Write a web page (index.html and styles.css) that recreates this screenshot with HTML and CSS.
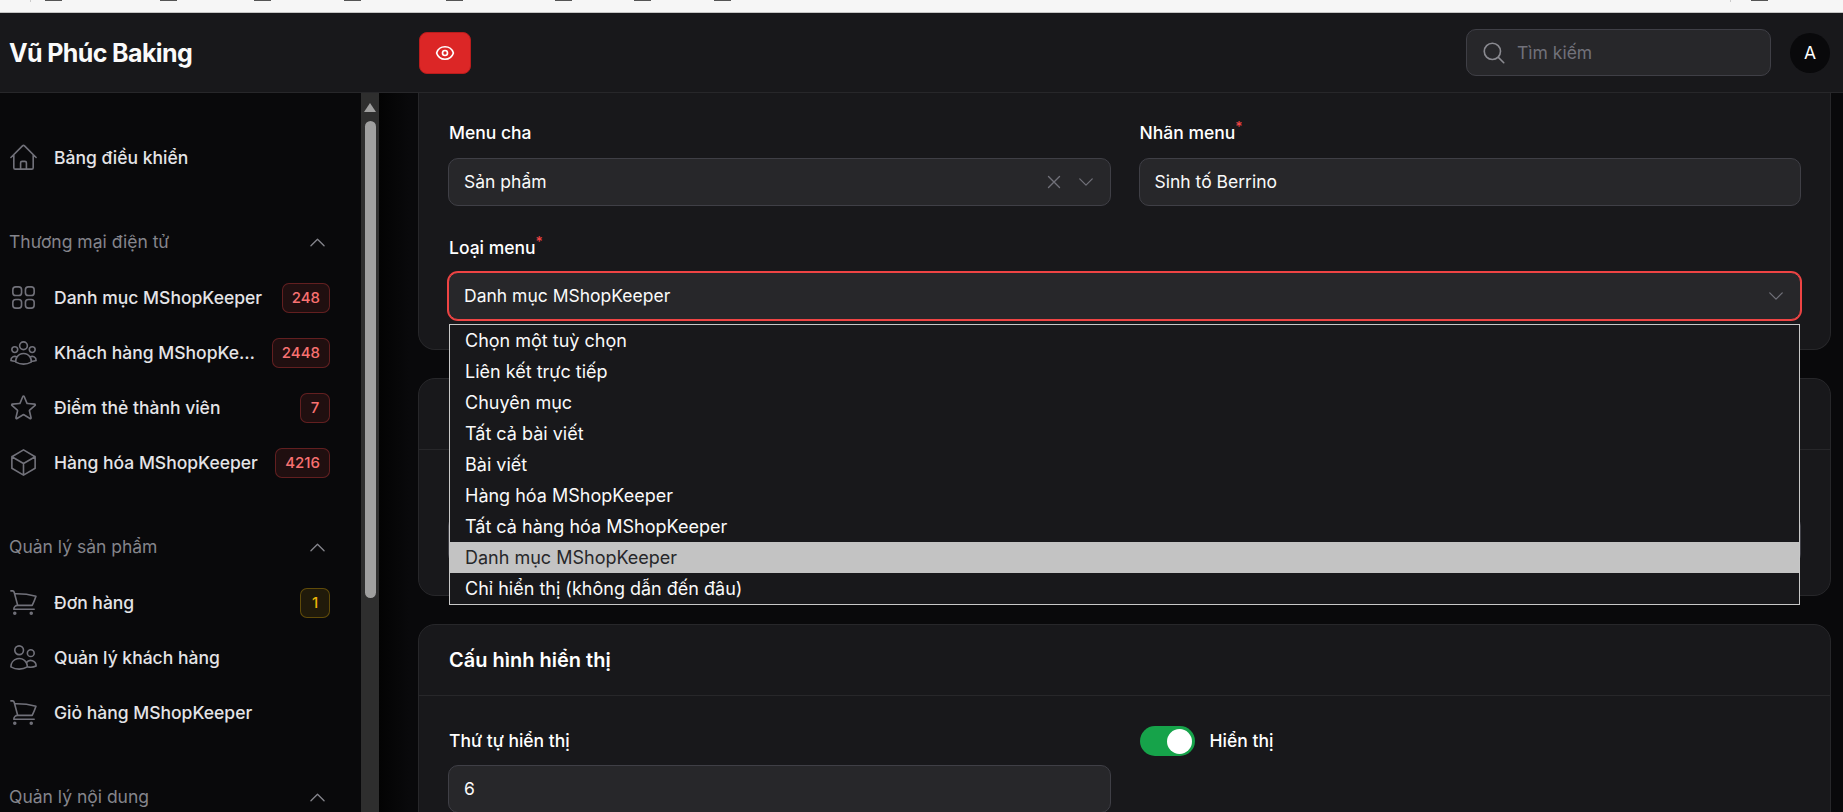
FILE: index.html
```html
<!DOCTYPE html>
<html lang="vi">
<head>
  <meta charset="UTF-8" />
  <meta name="viewport" content="width=device-width, initial-scale=1" />
  <title>Vũ Phúc Baking</title>
  <link rel="stylesheet" href="styles.css">
</head>
<body>

  <svg class="sprite" xmlns="http://www.w3.org/2000/svg">
    <symbol id="i-home" viewBox="0 0 24 24"><path d="m2.25 12 8.954-8.955c.44-.439 1.152-.439 1.591 0L21.75 12M4.5 9.75v10.125c0 .621.504 1.125 1.125 1.125H9.75v-4.875c0-.621.504-1.125 1.125-1.125h2.25c.621 0 1.125.504 1.125 1.125V21h4.125c.621 0 1.125-.504 1.125-1.125V9.75M8.25 21h8.25"/></symbol>
    <symbol id="i-squares" viewBox="0 0 24 24"><path d="M3.75 6A2.25 2.25 0 0 1 6 3.75h2.25A2.25 2.25 0 0 1 10.5 6v2.25a2.25 2.25 0 0 1-2.25 2.25H6a2.25 2.25 0 0 1-2.25-2.25V6ZM3.75 15.75A2.25 2.25 0 0 1 6 13.5h2.25a2.25 2.25 0 0 1 2.25 2.25V18a2.25 2.25 0 0 1-2.25 2.25H6A2.25 2.25 0 0 1 3.75 18v-2.25ZM13.5 6a2.25 2.25 0 0 1 2.25-2.25H18A2.25 2.25 0 0 1 20.25 6v2.25A2.25 2.25 0 0 1 18 10.5h-2.25a2.25 2.25 0 0 1-2.25-2.25V6ZM13.5 15.75a2.25 2.25 0 0 1 2.25-2.25H18a2.25 2.25 0 0 1 2.25 2.25V18A2.25 2.25 0 0 1 18 20.25h-2.25A2.25 2.25 0 0 1 13.5 18v-2.25Z"/></symbol>
    <symbol id="i-group" viewBox="0 0 24 24"><path d="M18 18.72a9.094 9.094 0 0 0 3.741-.479 3 3 0 0 0-4.682-2.72m.94 3.198.001.031c0 .225-.012.447-.037.666A11.944 11.944 0 0 1 12 21c-2.17 0-4.207-.576-5.963-1.584A6.062 6.062 0 0 1 6 18.719m12 0a5.971 5.971 0 0 0-.941-3.197m0 0A5.995 5.995 0 0 0 12 12.75a5.995 5.995 0 0 0-5.058 2.772m0 0a3 3 0 0 0-4.681 2.72 8.986 8.986 0 0 0 3.74.477m.94-3.197a5.971 5.971 0 0 0-.94 3.197M15 6.75a3 3 0 1 1-6 0 3 3 0 0 1 6 0Zm6 3a2.25 2.25 0 1 1-4.5 0 2.25 2.25 0 0 1 4.5 0Zm-13.5 0a2.25 2.25 0 1 1-4.5 0 2.25 2.25 0 0 1 4.5 0Z"/></symbol>
    <symbol id="i-star" viewBox="0 0 24 24"><path d="M11.48 3.499a.562.562 0 0 1 1.04 0l2.125 5.111a.563.563 0 0 0 .475.345l5.518.442c.499.04.701.663.321.988l-4.204 3.602a.563.563 0 0 0-.182.557l1.285 5.385a.562.562 0 0 1-.84.61l-4.725-2.885a.562.562 0 0 0-.586 0L6.982 20.54a.562.562 0 0 1-.84-.61l1.285-5.386a.562.562 0 0 0-.182-.557l-4.204-3.602a.562.562 0 0 1 .321-.988l5.518-.442a.563.563 0 0 0 .475-.345L11.48 3.5Z"/></symbol>
    <symbol id="i-cube" viewBox="0 0 24 24"><path d="m21 7.5-9-5.25L3 7.5m18 0-9 5.25m9-5.25v9l-9 5.25M3 7.5l9 5.25M3 7.5v9l9 5.25m0-9v9"/></symbol>
    <symbol id="i-cart" viewBox="0 0 24 24"><path d="M2.25 3h1.386c.51 0 .955.343 1.087.835l.383 1.437M7.5 14.25a3 3 0 0 0-3 3h15.75m-12.75-3h11.218c1.121-2.3 2.1-4.684 2.924-7.138a60.114 60.114 0 0 0-16.536-1.84M7.5 14.25 5.106 5.272M6 20.25a.75.75 0 1 1-1.5 0 .75.75 0 0 1 1.5 0Zm12.75 0a.75.75 0 1 1-1.5 0 .75.75 0 0 1 1.5 0Z"/></symbol>
    <symbol id="i-users" viewBox="0 0 24 24"><path d="M15 19.128a9.38 9.38 0 0 0 2.625.372 9.337 9.337 0 0 0 4.121-.952 4.125 4.125 0 0 0-7.533-2.493M15 19.128v-.003c0-1.113-.285-2.16-.786-3.07M15 19.128v.106A12.318 12.318 0 0 1 8.624 21c-2.331 0-4.512-.645-6.374-1.766l-.001-.109a6.375 6.375 0 0 1 11.964-3.07M12 6.375a3.375 3.375 0 1 1-6.75 0 3.375 3.375 0 0 1 6.75 0Zm8.25 2.25a2.625 2.625 0 1 1-5.25 0 2.625 2.625 0 0 1 5.25 0Z"/></symbol>
    <symbol id="i-eye" viewBox="0 0 24 24"><path d="M2.036 12.322a1.012 1.012 0 0 1 0-.639C3.423 7.51 7.36 4.5 12 4.5c4.638 0 8.573 3.007 9.963 7.178.07.207.07.431 0 .639C20.577 16.49 16.64 19.5 12 19.5c-4.638 0-8.573-3.007-9.963-7.178Z"/><path d="M15 12a3 3 0 1 1-6 0 3 3 0 0 1 6 0Z"/></symbol>
    <symbol id="i-search" viewBox="0 0 24 24"><path d="m21 21-5.197-5.197m0 0A7.5 7.5 0 1 0 5.196 5.196a7.5 7.5 0 0 0 10.607 10.607Z"/></symbol>
    <symbol id="i-up" viewBox="0 0 24 24"><path d="m4.5 15.75 7.5-7.5 7.5 7.5"/></symbol>
    <symbol id="i-down" viewBox="0 0 24 24"><path d="m19.5 8.25-7.5 7.5-7.5-7.5"/></symbol>
    <symbol id="i-x" viewBox="0 0 24 24"><path d="M6 18 18 6M6 6l12 12"/></symbol>
  </svg>

  <div class="browser-strip">
    <span class="tick-line"></span>
    <span class="tick"></span><span class="tick"></span><span class="tick"></span><span class="tick"></span>
    <span class="tick"></span><span class="tick"></span><span class="tick"></span><span class="tick"></span>
    <span class="strip-spacer"></span>
    <span class="tick-line"></span>
    <span class="tick"></span>
  </div>

  <header class="topbar">
    <div class="brand">Vũ Phúc Baking</div>
    <button class="eye-btn"><svg class="icon"><use href="#i-eye"/></svg></button>
    <div class="search">
      <svg class="icon"><use href="#i-search"/></svg>
      <span>Tìm kiếm</span>
    </div>
    <div class="avatar">A</div>
  </header>

  <div class="layout">
    <aside class="sidebar">
      <nav class="nav">
        <a class="nav-item"><svg class="icon"><use href="#i-home"/></svg><span class="nav-text">Bảng điều khiển</span></a>

        <div class="nav-group">
          <div class="nav-head">Thương mại điện tử<svg class="icon"><use href="#i-up"/></svg></div>
          <a class="nav-item"><svg class="icon"><use href="#i-squares"/></svg><span class="nav-text">Danh mục MShopKeeper</span><span class="badge">248</span></a>
          <a class="nav-item"><svg class="icon"><use href="#i-group"/></svg><span class="nav-text">Khách hàng MShopKeeper</span><span class="badge">2448</span></a>
          <a class="nav-item"><svg class="icon"><use href="#i-star"/></svg><span class="nav-text">Điểm thẻ thành viên</span><span class="badge">7</span></a>
          <a class="nav-item"><svg class="icon"><use href="#i-cube"/></svg><span class="nav-text">Hàng hóa MShopKeeper</span><span class="badge">4216</span></a>
        </div>

        <div class="nav-group">
          <div class="nav-head">Quản lý sản phẩm<svg class="icon"><use href="#i-up"/></svg></div>
          <a class="nav-item"><svg class="icon"><use href="#i-cart"/></svg><span class="nav-text">Đơn hàng</span><span class="badge badge-warn">1</span></a>
          <a class="nav-item"><svg class="icon"><use href="#i-users"/></svg><span class="nav-text">Quản lý khách hàng</span></a>
          <a class="nav-item"><svg class="icon"><use href="#i-cart"/></svg><span class="nav-text">Giỏ hàng MShopKeeper</span></a>
        </div>

        <div class="nav-group">
          <div class="nav-head">Quản lý nội dung<svg class="icon"><use href="#i-up"/></svg></div>
        </div>
      </nav>
      <div class="scrollbar">
        <span class="scroll-arrow"></span>
        <span class="scroll-thumb"></span>
      </div>
    </aside>

    <main class="main">
      <section class="card card-first">
        <div class="card-body">
          <div class="row">
            <div class="field">
              <label class="field-label">Menu cha</label>
              <div class="control">
                <span class="control-text">Sản phẩm</span>
                <svg class="icon icon-x"><use href="#i-x"/></svg>
                <svg class="icon icon-chevron"><use href="#i-down"/></svg>
              </div>
            </div>
            <div class="field">
              <label class="field-label">Nhãn menu<sup>*</sup></label>
              <div class="control"><span class="control-text">Sinh tố Berrino</span></div>
            </div>
          </div>
          <div class="field select-field">
            <label class="field-label">Loại menu<sup>*</sup></label>
            <div class="control control-focus">
              <span class="control-text">Danh mục MShopKeeper</span>
              <svg class="icon icon-chevron"><use href="#i-down"/></svg>
            </div>
            <ul class="listbox">
              <li>Chọn một tuỳ chọn</li>
              <li>Liên kết trực tiếp</li>
              <li>Chuyên mục</li>
              <li>Tất cả bài viết</li>
              <li>Bài viết</li>
              <li>Hàng hóa MShopKeeper</li>
              <li>Tất cả hàng hóa MShopKeeper</li>
              <li class="selected">Danh mục MShopKeeper</li>
              <li>Chỉ hiển thị (không dẫn đến đâu)</li>
            </ul>
          </div>
        </div>
      </section>

      <section class="card">
        <div class="card-head"></div>
        <div class="card-body card-body-hidden">
          <div class="control"></div>
        </div>
      </section>

      <section class="card">
        <div class="card-head"><h2>Cấu hình hiển thị</h2></div>
        <div class="card-body card-body-display">
          <div class="row">
            <div class="field">
              <label class="field-label row-label">Thứ tự hiển thị</label>
              <div class="control"><span class="control-text">6</span></div>
            </div>
            <div class="toggle-field">
              <span class="toggle"><span class="toggle-knob"></span></span>
              <span class="toggle-label">Hiển thị</span>
            </div>
          </div>
        </div>
      </section>
    </main>
  </div>

</body>
</html>
```

FILE: styles.css
```css
* {
  box-sizing: border-box;
}
html, body {
  height: 812px;
  overflow: hidden;
}
body {
  margin: 0;
  background-color: #09090b;
  color: #fff;
  font-family: Inter, "Noto Sans", sans-serif;
  font-size: 17.5px;
  line-height: 24px;
}
.sprite {
  display: none;
}
.icon {
  fill: none;
  stroke: currentColor;
  stroke-width: 1.5;
  stroke-linecap: round;
  stroke-linejoin: round;
  flex: none;
}

/* strip of the browser above the page */
.browser-strip {
  height: 13px;
  background-color: #f6f6f6;
  border-bottom: 1px solid #c4c4c4;
  display: flex;
  padding: 0 75px 0 30px;
}
.tick {
  width: 17px;
  height: 1px;
  background-color: #555;
}
.tick:nth-child(2) { margin-left: 14px; }
.tick:nth-child(3) { margin-left: 98px; }
.tick:nth-child(4) { margin-left: 77px; }
.tick:nth-child(5) { margin-left: 73px; }
.tick:nth-child(6) { margin-left: 85px; }
.tick:nth-child(7) { margin-left: 92px; }
.tick:nth-child(8) { margin-left: 62px; }
.tick:nth-child(9) { margin-left: 63px; }
.tick:last-child { margin-left: 20px; }
.tick-line {
  width: 1px;
  height: 2px;
  background-color: #ccc;
}
.strip-spacer {
  flex: 1;
}

/* top bar */
.topbar {
  height: 80px;
  background-color: #18181b;
  border-bottom: 1px solid #27272a;
  display: flex;
  align-items: center;
  padding: 0 13px 0 9px;
}
.brand {
  width: 410px;
  font-size: 25px;
  font-weight: 700;
  letter-spacing: -0.625px;
  color: #fafafa;
}
.eye-btn {
  width: 52px;
  height: 42px;
  border: 1px solid #b91c1c;
  border-radius: 8px;
  background-color: #dc2626;
  color: #fff;
  display: flex;
  align-items: center;
  justify-content: center;
  padding: 0;
}
.eye-btn .icon {
  width: 20px;
  height: 20px;
  stroke-width: 2;
}
.search {
  margin-left: auto;
  width: 305px;
  height: 47px;
  background-color: #27272a;
  border: 1px solid #3f3f46;
  border-radius: 10px;
  display: flex;
  align-items: center;
  gap: 10px;
  padding-left: 14px;
  color: #71717a;
}
.search .icon {
  width: 26px;
  height: 26px;
  color: #8a8a90;
}
.avatar {
  width: 40px;
  height: 40px;
  margin-left: 19px;
  border-radius: 50%;
  background-color: #09090b;
  display: flex;
  align-items: center;
  justify-content: center;
}

/* sidebar */
.layout {
  display: flex;
  height: 719px;
}
.sidebar {
  width: 379px;
  flex: none;
  display: flex;
  background-color: #09090b;
}
.nav {
  width: 361px;
  padding: 37px 31px 0 9px;
  overflow: hidden;
}
.nav-group {
  margin-top: 29px;
}
.nav-head {
  height: 56px;
  display: flex;
  align-items: center;
  justify-content: space-between;
  color: #85858c;
  padding-right: 2px;
}
.nav-head .icon {
  width: 21px;
  height: 21px;
}
.nav-item {
  height: 55px;
  display: flex;
  align-items: center;
  gap: 15px;
  color: #e4e4e7;
  font-weight: 500;
}
.nav-item .icon {
  width: 31px;
  height: 31px;
  margin-left: -1px;
  color: #71717a;
  stroke-width: 1.25;
}
.nav-text {
  flex: 1;
  min-width: 0;
  white-space: nowrap;
  overflow: hidden;
  text-overflow: ellipsis;
}
.badge {
  height: 30px;
  min-width: 30px;
  padding: 0 9px;
  flex: none;
  border: 1px solid rgba(239, 68, 68, 0.32);
  border-radius: 7px;
  background-color: rgba(239, 68, 68, 0.1);
  color: #f87171;
  font-size: 15px;
  line-height: 28px;
  text-align: center;
}
.badge-warn {
  border-color: rgba(234, 179, 8, 0.32);
  background-color: rgba(234, 179, 8, 0.1);
  color: #eab308;
}
.scrollbar {
  width: 18px;
  background-color: #2e2e2e;
  display: flex;
  flex-direction: column;
  align-items: center;
}
.scroll-arrow {
  margin-top: 10px;
  width: 0;
  height: 0;
  border-left: 6px solid transparent;
  border-right: 6px solid transparent;
  border-bottom: 9px solid #9f9f9f;
}
.scroll-thumb {
  margin-top: 9px;
  width: 11px;
  height: 477px;
  border-radius: 6px;
  background-color: #9f9f9f;
}

/* main column */
.main {
  flex: 1;
  min-width: 0;
  padding: 0 12px 0 39px;
  overflow: hidden;
  background: linear-gradient(to right, #030303, #09090b 30px);
}
.card {
  background-color: #18181b;
  border: 1px solid #27272a;
  border-radius: 17px;
  margin-bottom: 28px;
}
.card-first {
  border-top: none;
  border-radius: 0 0 17px 17px;
}
.card-head {
  height: 71px;
  border-bottom: 1px solid #27272a;
  padding: 0 30px;
  display: flex;
  align-items: center;
}
.card-head h2 {
  margin: 0;
  font-size: 20px;
  font-weight: 600;
}
.card-body {
  padding: 28px 29px 29px;
}
.card-body-hidden {
  padding-top: 66px;
  padding-bottom: 31px;
}
.card-body-display {
  padding-top: 30px;
}
.row {
  display: grid;
  grid-template-columns: 1fr 1fr;
  gap: 28px;
  align-items: start;
}
.field-label {
  display: block;
  margin: 0 0 13px 1px;
  font-weight: 500;
}
.field-label sup {
  color: #ef4444;
  font-size: 14px;
  line-height: 0;
}
.row-label {
  line-height: 30px;
  margin-bottom: 9px;
}
.control {
  height: 48px;
  background-color: #27272a;
  border: 1px solid #3f3f46;
  border-radius: 10px;
  display: flex;
  align-items: center;
  padding: 0 14px 0 15px;
  color: #fafafa;
}
.control-text {
  flex: 1;
}
.control .icon {
  color: #71717a;
}
.icon-x {
  width: 22px;
  height: 22px;
  margin-right: 11px;
}
.icon-chevron {
  width: 20px;
  height: 20px;
}
.control-focus {
  border-color: #ef4444;
  box-shadow: 0 0 0 1px #ef4444;
}
.select-field {
  margin-top: 30px;
  position: relative;
}
.select-field .field-label {
  margin-bottom: 12px;
}

/* open list of the select, drawn over the cards */
.listbox {
  position: absolute;
  top: 88px;
  left: 1px;
  width: 1351px;
  margin: 0;
  padding: 0;
  list-style: none;
  font-size: 18px;
  background-color: #18181b;
  border: 1px solid #c8c8c8;
  z-index: 2;
}
.listbox li {
  height: 31px;
  line-height: 31px;
  padding-left: 15px;
  color: #fafafa;
}
.listbox .selected {
  background-color: #c3c3c3;
  color: #27272a;
}

.toggle-field {
  display: flex;
  align-items: center;
  gap: 15px;
  height: 30px;
  font-weight: 500;
}
.toggle {
  width: 55px;
  height: 30px;
  border-radius: 15px;
  background-color: #16a34a;
  display: flex;
  align-items: center;
  justify-content: flex-end;
  padding-right: 3px;
  margin-left: 1px;
}
.toggle-knob {
  width: 25px;
  height: 25px;
  border-radius: 50%;
  background-color: #fff;
}
```
